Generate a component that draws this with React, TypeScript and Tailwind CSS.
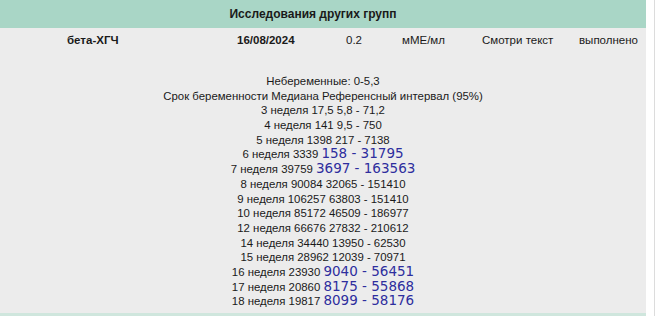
const lines: [string, string?][] = [
  ["Небеременные: 0-5,3"],
  ["Срок беременности Медиана Референсный интервал (95%)"],
  ["3 неделя 17,5 5,8 - 71,2"],
  ["4 неделя 141 9,5 - 750"],
  ["5 неделя 1398 217 - 7138"],
  ["6 неделя 3339 ", "158 - 31795"],
  ["7 неделя 39759 ", "3697 - 163563"],
  ["8 неделя 90084 32065 - 151410"],
  ["9 неделя 106257 63803 - 151410"],
  ["10 неделя 85172 46509 - 186977"],
  ["12 неделя 66676 27832 - 210612"],
  ["14 неделя 34440 13950 - 62530"],
  ["15 неделя 28962 12039 - 70971"],
  ["16 неделя 23930 ", "9040 - 56451"],
  ["17 неделя 20860 ", "8175 - 55868"],
  ["18 неделя 19817 ", "8099 - 58176"],
];

export default function App() {
  return (
    <div className="w-[660px] h-[316px] bg-white flex overflow-hidden font-['Liberation_Sans',Arial,sans-serif]">
      <div className="w-[646px] h-full flex flex-col">
        <div className="h-[28px] shrink-0 bg-[#a9d6c6] flex items-center justify-center pr-[20px] text-[12px] font-bold text-[#1a1a1a]">
          Исследования других групп
        </div>
        <div className="flex-1 min-h-0 bg-[#ececec] flex flex-col">
          <div className="h-[25px] shrink-0 flex items-center pl-[67px] text-[11.5px] text-[#1a1a1a]">
            <div className="w-[170px] font-bold">бета-ХГЧ</div>
            <div className="w-[109px] font-bold">16/08/2024</div>
            <div className="w-[56px]">0.2</div>
            <div className="w-[80px]">мМЕ/мл</div>
            <div className="w-[97px]">Смотри текст</div>
            <div>выполнено</div>
          </div>
          <div className="pt-[21px] flex flex-col items-center text-[11.4px] text-[#1a1a1a]">
            {lines.map(([a, b], i) => (
              <div key={i} className="h-[14.7px] leading-[14.7px] whitespace-pre">
                {a}
                {b && (
                  <span className="font-['DejaVu_Sans',Verdana,sans-serif] text-[13.5px] leading-none text-[#2e2e9e]">
                    {b}
                  </span>
                )}
              </div>
            ))}
          </div>
        </div>
        <div className="h-[3px] shrink-0 bg-[#cfe6dd]" />
      </div>
      <div className="w-[8px]" />
      <div className="w-px bg-[#dcdcdc]" />
    </div>
  );
}
